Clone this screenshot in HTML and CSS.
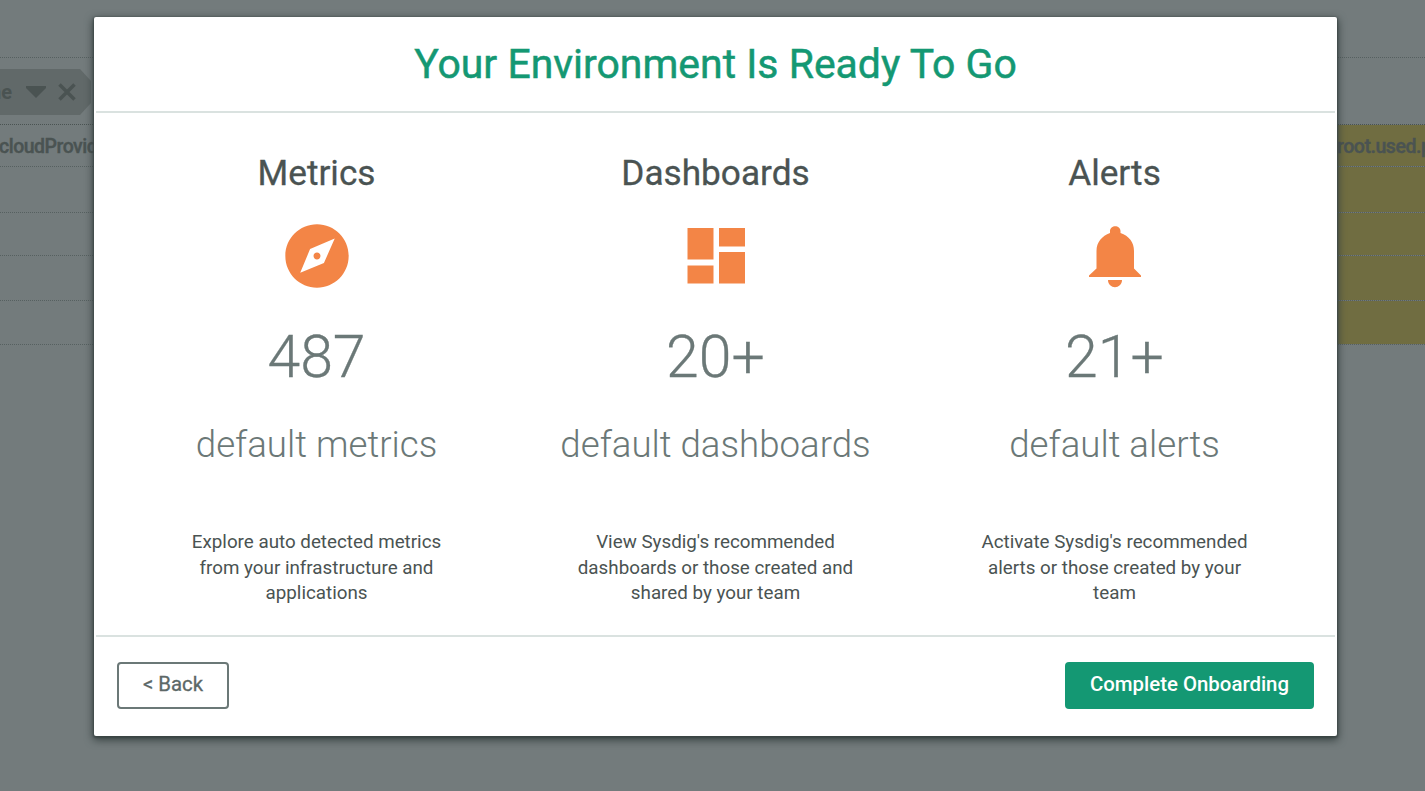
FILE: index.html
```
<!DOCTYPE html>
<html lang="en">
<head>
<meta charset="utf-8">
<title>Onboarding</title>
<link rel="stylesheet" href="styles.css">
</head>
<body>
<div class="page">
  <div class="page-top"></div>
  <div class="filters">
    <div class="chip">
      <span class="chip-label">ne</span>
      <svg width="20" height="12" viewBox="0 0 20 12"><path d="M0 0H20V2L10 12L0 2Z"/></svg>
      <svg class="chip-close" width="18" height="18" viewBox="0 0 18 18"><path d="M1.500 1.500L16.500 16.500M16.500 1.500L1.500 16.500"/></svg>
    </div>
  </div>
  <div class="table">
    <div class="row head"><span class="cell-left">cloudProvid</span><span class="cell-right">root.used.p</span></div>
    <div class="row r1"><span class="cell-right"></span></div>
    <div class="row r2"><span class="cell-right"></span></div>
    <div class="row r3"><span class="cell-right"></span></div>
    <div class="row r4"><span class="cell-right"></span></div>
  </div>
</div>
<main class="modal">
  <header class="modal-header"><h1 class="title">Your Environment Is Ready To Go</h1></header>
  <section class="columns">
    <article class="column">
      <h2 class="name">Metrics</h2>
      <svg class="icon" viewBox="0 0 24 24"><path d="M12 10.900c-.61 0-1.100.49-1.100 1.100s.49 1.100 1.100 1.100c.61 0 1.100-.49 1.100-1.100s-.49-1.100-1.100-1.100zM12 2C6.480 2 2 6.480 2 12s4.480 10 10 10 10-4.480 10-10S17.520 2 12 2zm2.190 12.190L6.700 17.300l3.110-7.490L17.600 6.500l-3.410 7.690z"/></svg>
      <div class="count">487</div>
      <div class="kind">default metrics</div>
      <p class="text">Explore auto detected metrics<br>from your infrastructure and<br>applications</p>
    </article>
    <article class="column">
      <h2 class="name">Dashboards</h2>
      <svg class="icon" viewBox="0 0 76 76"><path d="M9.500 10H35.500V41.500H9.500ZM41 10H67V28.500H41ZM9.500 47.500H35.500V65.500H9.500ZM41 34H67V65.500H41Z"/></svg>
      <div class="count">20+</div>
      <div class="kind">default dashboards</div>
      <p class="text">View Sysdig's recommended<br>dashboards or those created and<br>shared by your team</p>
    </article>
    <article class="column">
      <h2 class="name">Alerts</h2>
      <svg class="icon" viewBox="0 0 76 76"><path d="M33 15V13C33 6.500 43.500 6.500 43.500 13V15C52 18 57 24 57 33V50.500L64 57.500V59H12V57.500L19.500 50.500V33C19.500 24 25 18 33 15ZM31 62H45C45 71.500 31 71.500 31 62Z"/></svg>
      <div class="count">21+</div>
      <div class="kind">default alerts</div>
      <p class="text">Activate Sysdig's recommended<br>alerts or those created by your<br>team</p>
    </article>
  </section>
  <footer class="modal-footer">
    <button class="btn back">&lt; Back</button>
    <button class="btn done">Complete Onboarding</button>
  </footer>
</main>
</body>
</html>
```
FILE: styles.css
```
* { box-sizing: border-box; }
body {
  margin: 0;
  height: 791px;
  overflow: hidden;
  background: #737b7c;
  font-family: Roboto, "Liberation Sans", sans-serif;
  color: #4a5352;
}
.page { height: 791px; }
.page-top { height: 58px; border-bottom: 1px dotted #566060; }
.filters { height: 66px; padding-top: 11px; }
.chip {
  display: flex;
  align-items: center;
  width: 91px;
  height: 46px;
  background: #616969;
  clip-path: polygon(0 0, 80px 0, 91px 12px, 91px 34px, 80px 46px, 0 46px);
  fill: #4a5352;
}
.chip-label { width: 36px; margin-left: -10px; flex: none; font-size: 20px; font-weight: 700; }
.chip-close { margin-left: 12px; stroke: #4a5352; stroke-width: 3.500; }
.table { border-top: 1px dotted #4a5352; }
.row {
  display: flex;
  justify-content: space-between;
  border-bottom: 1px dotted #566060;
  font-size: 19.500px;
  font-weight: 500;
  line-height: 43px;
}
.head { height: 42px; }
.r1 { height: 46px; }
.r2 { height: 43px; }
.r3 { height: 45px; }
.r4 { height: 44px; }
.cell-left { letter-spacing: -.5px; margin-left: -1px; -webkit-text-stroke: .4px #4a5352; }
.cell-right { width: 88px; margin-left: auto; background: #706d41; letter-spacing: -.45px; -webkit-text-stroke: .4px #4a5352; }
.modal {
  position: absolute;
  left: 94px;
  top: 17px;
  width: 1243px;
  height: 719px;
  display: flex;
  flex-direction: column;
  background: #fff;
  border-radius: 2px;
  box-shadow: 0 3px 8px 1px #364140, 0 1px 2px 1px #4a5352;
}
.modal-header {
  height: 96px;
  margin: 0 2px;
  border-bottom: 2px solid #dae2e0;
  text-align: center;
}
.title { margin: 0; font-size: 40.950px; font-weight: 400; line-height: 95px; color: #149873; -webkit-text-stroke: .5px #149873; }
.columns { display: grid; grid-template-columns: repeat(3, 1fr); height: 522px; padding: 0 23px; }
.column { display: flex; flex-direction: column; align-items: center; padding-top: 35px; text-align: center; white-space: nowrap; }
.name { margin: 0; height: 70px; font-size: 35.200px; font-weight: 400; line-height: 50px; -webkit-text-stroke: .3px #4a5352; }
.icon { width: 76px; height: 76px; fill: #f38546; }
.count { height: 100px; margin-top: 23px; font-size: 59px; font-weight: 300; line-height: 80px; color: #6b7877; -webkit-text-stroke: .3px #6b7877; }
.kind { height: 80px; font-size: 36.650px; font-weight: 300; line-height: 56px; color: #6b7877; }
.text { margin: 33px 0 0; font-size: 18.800px; font-weight: 400; line-height: 25.500px; }
.modal-footer {
  display: flex;
  justify-content: space-between;
  height: 101px;
  margin: 0 2px;
  padding: 25px 21px 0;
  border-top: 2px solid #dae2e0;
}
.btn { height: 47px; padding: 0 0 3px; border-radius: 4px; font-family: inherit; font-size: 20.400px; }
.back { width: 112px; border: 2px solid #6b7877; background: #fff; color: #5c6867; -webkit-text-stroke: .3px #5c6867; }
.done { width: 249px; border: 0; background: #149873; color: #fff; font-weight: 500; }
```
